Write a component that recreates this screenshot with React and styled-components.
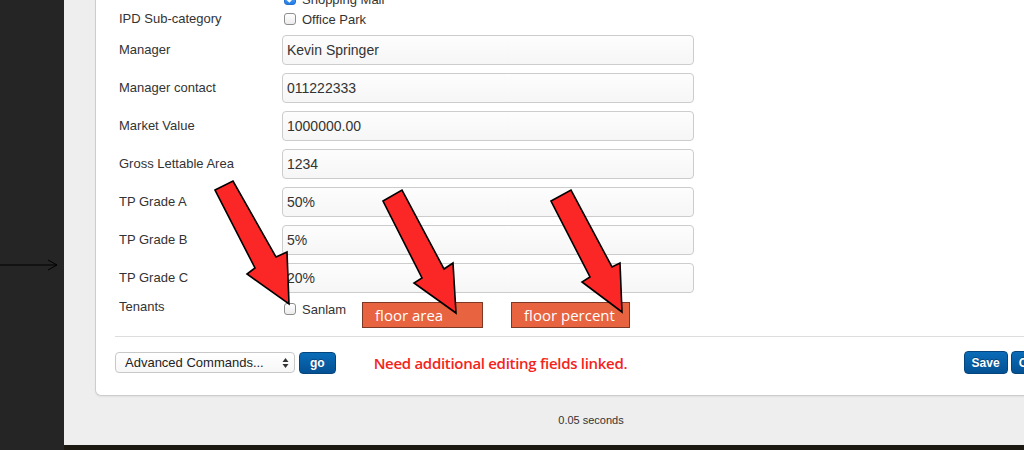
import React from 'react'
import styled, { createGlobalStyle } from 'styled-components'

const GlobalStyle = createGlobalStyle`
  html, body {
    margin: 0;
    padding: 0;
    background: #eee;
    overflow: hidden;
  }
  body {
    font-family: "Liberation Sans", Arial, sans-serif;
    color: #333;
  }
`

const Page = styled.div`
  position: relative;
  display: flex;
  width: 1118px;
  height: 450px;
  overflow: hidden;
`

const Sidebar = styled.div`
  width: 64px;
  flex: none;
  background: #252525;
`

const Main = styled.div`
  flex: 1;
  display: flex;
  flex-direction: column;
  background: #eee;
`

const Content = styled.div`
  padding: 0 31px;
`

const Panel = styled.div`
  background: #fff;
  border: 1px solid #cdcdcd;
  border-top: none;
  border-radius: 0 0 6px 6px;
  box-shadow: 0 1px 2px rgba(0, 0, 0, 0.06);
  padding: 0 20px 21px 19px;
`

// page is scrolled down a little, the category row sits above the fold
const Scrolled = styled.div`
  margin-top: -11px;
`

const FormRow = styled.div`
  display: grid;
  grid-template-columns: 167px 412px;
  align-items: ${p => (p.$top ? 'start' : 'center')};
  margin-bottom: ${p => p.$gap ?? 8}px;
`

const Label = styled.div`
  padding-left: 4px;
  font-size: 13px;
  line-height: ${p => p.$lh ?? 20}px;
  color: #333;
`

const CheckList = styled.div`
  display: flex;
  flex-direction: column;
`

const CheckItem = styled.label`
  display: flex;
  align-items: center;
  height: 20px;
  font-size: 13px;
  color: #333;
`

const Box = styled.span`
  box-sizing: border-box;
  width: 12px;
  height: 12px;
  margin: 0 6px 0 2px;
  border: 1px solid #8e8e8e;
  border-radius: 3px;
  background: ${p => (p.$checked ? 'linear-gradient(#6cb3fa, #1e7ee8)' : 'linear-gradient(#fff, #ececec)')};
  border-color: ${p => (p.$checked ? '#2a6fc9' : '#8e8e8e')};
  display: flex;
  align-items: center;
  justify-content: center;
  flex: none;
`

const Input = styled.div`
  box-sizing: border-box;
  height: 30px;
  border: 1px solid #ccc;
  border-radius: 4px;
  background: linear-gradient(#fdfdfd, #f6f6f6);
  padding: 0 4px;
  font-size: 14px;
  line-height: 28px;
  color: #333;
`

const TenantField = styled.div`
  display: flex;
  align-items: flex-start;
`

const TenantCheck = styled(CheckItem)`
  margin-top: 1px;
  height: 18px;
`

const Tag = styled.div`
  box-sizing: border-box;
  height: 26px;
  margin-top: 3px;
  margin-left: ${p => p.$ml}px;
  width: ${p => p.$w}px;
  padding-left: 12px;
  background: #e8633f;
  border: 1px solid #7c3a26;
  color: #fff;
  font-family: "Open Sans", sans-serif;
  font-size: 15px;
  line-height: 24px;
`

const Divider = styled.hr`
  margin: 8px 0 14px 0;
  border: none;
  border-top: 1px solid #ddd;
`

const ActionBar = styled.div`
  display: flex;
  align-items: center;
  height: 23px;
`

const Select = styled.div`
  box-sizing: border-box;
  width: 180px;
  height: 21px;
  border: 1px solid #c8c8c8;
  border-radius: 4px;
  background: linear-gradient(#fff, #f7f7f7);
  display: flex;
  align-items: center;
  justify-content: space-between;
  padding: 0 5px 0 9px;
  font-size: 13px;
  color: #222;
`

const Button = styled.div`
  box-sizing: border-box;
  height: ${p => p.$h ?? 23}px;
  padding: 0 ${p => p.$px ?? 9}px;
  margin-left: ${p => p.$ml ?? 0}px;
  border: 1px solid #03457c;
  border-radius: 4px;
  background: linear-gradient(#0a6cb8, #045193);
  color: #fff;
  font-size: 12px;
  font-weight: bold;
  display: flex;
  align-items: center;
  justify-content: center;
  text-shadow: 0 -1px 0 rgba(0, 0, 0, 0.3);
`

const Notice = styled.div`
  margin-left: 38px;
  font-family: "Open Sans", sans-serif;
  font-size: 15px;
  font-weight: 600;
  letter-spacing: -0.3px;
  color: #f4231b;
`

const Spacer = styled.div`
  flex: 1;
`

const Timing = styled.div`
  box-sizing: border-box;
  height: 49px;
  padding-bottom: 2px;
  display: flex;
  align-items: center;
  justify-content: center;
  font-size: 11px;
  color: #333;
`

const Footer = styled.div`
  flex: 1;
  background: #1c1812;
`

const Overlay = styled.svg`
  position: absolute;
  left: 0;
  top: 0;
  pointer-events: none;
`

const Tick = () => (
  <svg width="9" height="8" viewBox="0 0 9 8">
    <path d="M1 4.2 L3.4 6.5 L8 1.3" fill="none" stroke="#fff" strokeWidth="1.8" />
  </svg>
)

const Check = ({ checked, children }) => (
  <CheckItem>
    <Box $checked={checked}>{checked && <Tick />}</Box>
    {children}
  </CheckItem>
)

// hand-drawn callout arrows pointing at the tenant fields
const arrows = [
  '215,190 233,181 276,257 287,252 289,304 247,274 255,268',
  '383,201 402,190 444,269 453,263 456,313 414,283 422,278',
  '551,201 571,190 612,267 620,263 622,312 582,282 590,277',
]

const fields = [
  ['Manager', 'Kevin Springer'],
  ['Manager contact', '011222333'],
  ['Market Value', '1000000.00'],
  ['Gross Lettable Area', '1234'],
  ['TP Grade A', '50%'],
  ['TP Grade B', '5%'],
  ['TP Grade C', '20%'],
]

export default function App() {
  return (
    <>
      <GlobalStyle />
      <Page>
        <Sidebar />
        <Main>
          <Content>
            <Panel>
              <Scrolled>
                <FormRow $top $gap={0}>
                  <Label />
                  <CheckList>
                    <Check checked>Shopping Mall</Check>
                  </CheckList>
                </FormRow>
                <FormRow $top $gap={6}>
                  <Label>IPD Sub-category</Label>
                  <CheckList>
                    <Check>Office Park</Check>
                  </CheckList>
                </FormRow>
                {fields.map(([label, value], i) => (
                  <FormRow key={label} $gap={i === fields.length - 1 ? 6 : 8}>
                    <Label>{label}</Label>
                    <Input>{value}</Input>
                  </FormRow>
                ))}
                <FormRow $top $gap={0}>
                  <Label $lh={15}>Tenants</Label>
                  <TenantField>
                    <TenantCheck>
                      <Box />
                      Sanlam
                    </TenantCheck>
                    <Tag $ml={16} $w={121}>floor area</Tag>
                    <Tag $ml={28} $w={119}>floor percent</Tag>
                  </TenantField>
                </FormRow>
              </Scrolled>
              <Divider />
              <ActionBar>
                <Select>
                  Advanced Commands...
                  <svg width="7" height="12" viewBox="0 0 7 12">
                    <path d="M3.5 1 L6.5 5 H0.5 Z M3.5 11 L6.5 7 H0.5 Z" fill="#333" />
                  </svg>
                </Select>
                <Button $ml={4} $h={22} $px={10}>go</Button>
                <Notice>Need additional editing fields linked.</Notice>
                <Spacer />
                <Button $px={7}>Save</Button>
                <Button $ml={3} $px={7}>Cancel</Button>
              </ActionBar>
            </Panel>
          </Content>
          <Timing>0.05 seconds</Timing>
          <Footer />
        </Main>
        <Overlay width="1024" height="450" viewBox="0 0 1024 450">
          <path d="M0 265 H57 M48 260 L57 265 L48 270" fill="none" stroke="#000" strokeWidth="1" />
          {arrows.map(points => (
            <polygon key={points} points={points} fill="#fb2727" stroke="#000" strokeWidth="1.6" strokeLinejoin="miter" />
          ))}
        </Overlay>
      </Page>
    </>
  )
}
